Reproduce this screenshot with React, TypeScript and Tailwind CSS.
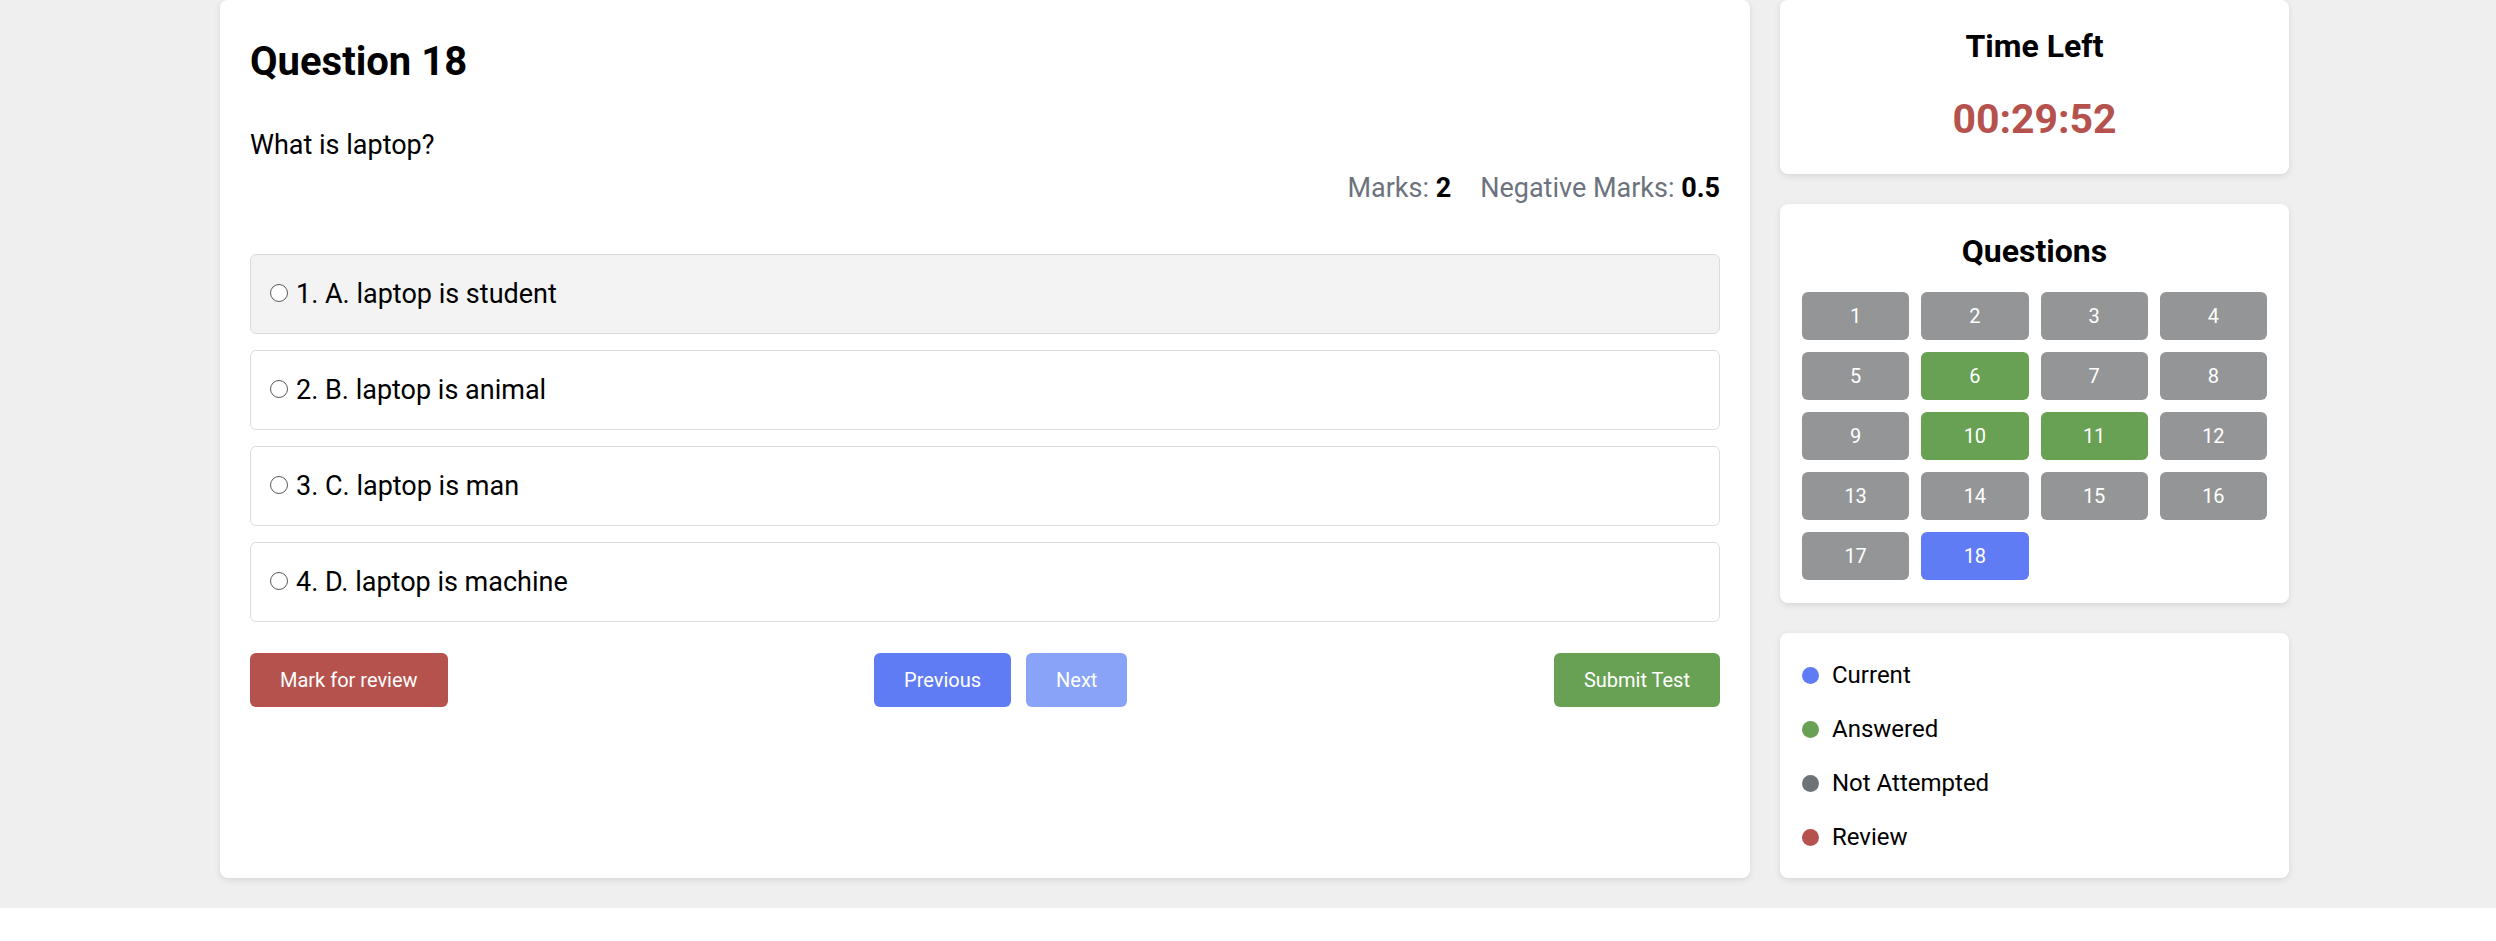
const options = [
  "1. A. laptop is student",
  "2. B. laptop is animal",
  "3. C. laptop is man",
  "4. D. laptop is machine",
];

const answered = [6, 10, 11];
const current = 18;

const legend = [
  { label: "Current", color: "bg-[#5f7cf4]" },
  { label: "Answered", color: "bg-[#68a153]" },
  { label: "Not Attempted", color: "bg-[#6e737a]" },
  { label: "Review", color: "bg-[#b5524d]" },
];

function Card({ className = "", children }: { className?: string; children: React.ReactNode }) {
  return (
    <div className={`bg-white rounded-[8px] shadow-[0_2px_6px_rgba(0,0,0,0.10)] ${className}`}>
      {children}
    </div>
  );
}

export default function App() {
  return (
    <div className="min-h-screen bg-white font-['Roboto','Liberation_Sans',sans-serif] text-black">
      <div className="flex items-start gap-[30px] bg-[#efefef] pl-[220px] pb-[30px]">
        {/* question panel */}
        <Card className="w-[1530px] h-[878px] px-[30px] pt-[38px]">
          <h2 className="text-[40px] leading-[48px] font-bold">Question 18</h2>
          <p className="mt-[43px] text-[27px] leading-[32px]">What is laptop?</p>
          <div className="mt-[11px] flex justify-end gap-[29px] text-[27px] leading-[32px] text-[#6c737d]">
            <span>
              Marks: <b className="text-black">2</b>
            </span>
            <span>
              Negative Marks: <b className="text-black">0.5</b>
            </span>
          </div>

          <div className="mt-[50px] flex flex-col gap-[16px]">
            {options.map((opt, i) => (
              <label
                key={opt}
                className={`h-[80px] flex items-center pl-[19px] border border-[#dcdcdc] rounded-[6px] text-[27px] leading-[32px] ${
                  i === 0 ? "bg-[#f3f3f3]" : "bg-white"
                }`}
              >
                <span className="w-[18px] h-[18px] -mt-[2px] rounded-full border-[1.5px] border-[#5a5a5a] bg-white mr-[8px]" />
                {opt}
              </label>
            ))}
          </div>

          <div className="mt-[31px] flex justify-between text-[20px] text-white">
            <button className="h-[54px] px-[30px] rounded-[6px] bg-[#b5524d]">Mark for review</button>
            <div className="flex gap-[15px]">
              <button className="h-[54px] px-[30px] rounded-[6px] bg-[#5f7cf4]">Previous</button>
              <button className="h-[54px] px-[30px] rounded-[6px] bg-[#88a3f8]">Next</button>
            </div>
            <button className="h-[54px] px-[30px] rounded-[6px] bg-[#68a153]">Submit Test</button>
          </div>
        </Card>

        {/* side panel */}
        <div className="w-[509px] flex flex-col gap-[30px]">
          <Card className="h-[174px] flex flex-col items-center pt-[27px]">
            <h3 className="text-[32px] leading-[38px] font-bold">Time Left</h3>
            <div className="mt-[30px] text-[41px] leading-[48px] font-bold text-[#b5524d]">00:29:52</div>
          </Card>

          <Card className="px-[22px] pt-[28px] pb-[23px]">
            <h3 className="text-center text-[32px] leading-[38px] font-bold">Questions</h3>
            <div className="mt-[22px] grid grid-cols-4 gap-[12px]">
              {Array.from({ length: 18 }, (_, k) => k + 1).map((n) => (
                <div
                  key={n}
                  className={`h-[48px] rounded-[6px] flex items-center justify-center text-[20px] text-white ${
                    n === current ? "bg-[#5f7cf4]" : answered.includes(n) ? "bg-[#68a153]" : "bg-[#949596]"
                  }`}
                >
                  {n}
                </div>
              ))}
            </div>
          </Card>

          <Card className="px-[22px] pt-[27px] pb-[26px] flex flex-col gap-[24px]">
            {legend.map((l) => (
              <div key={l.label} className="flex items-center gap-[13px] text-[24px] leading-[30px]">
                <span className={`w-[17px] h-[17px] rounded-full ${l.color}`} />
                {l.label}
              </div>
            ))}
          </Card>
        </div>
      </div>
    </div>
  );
}
